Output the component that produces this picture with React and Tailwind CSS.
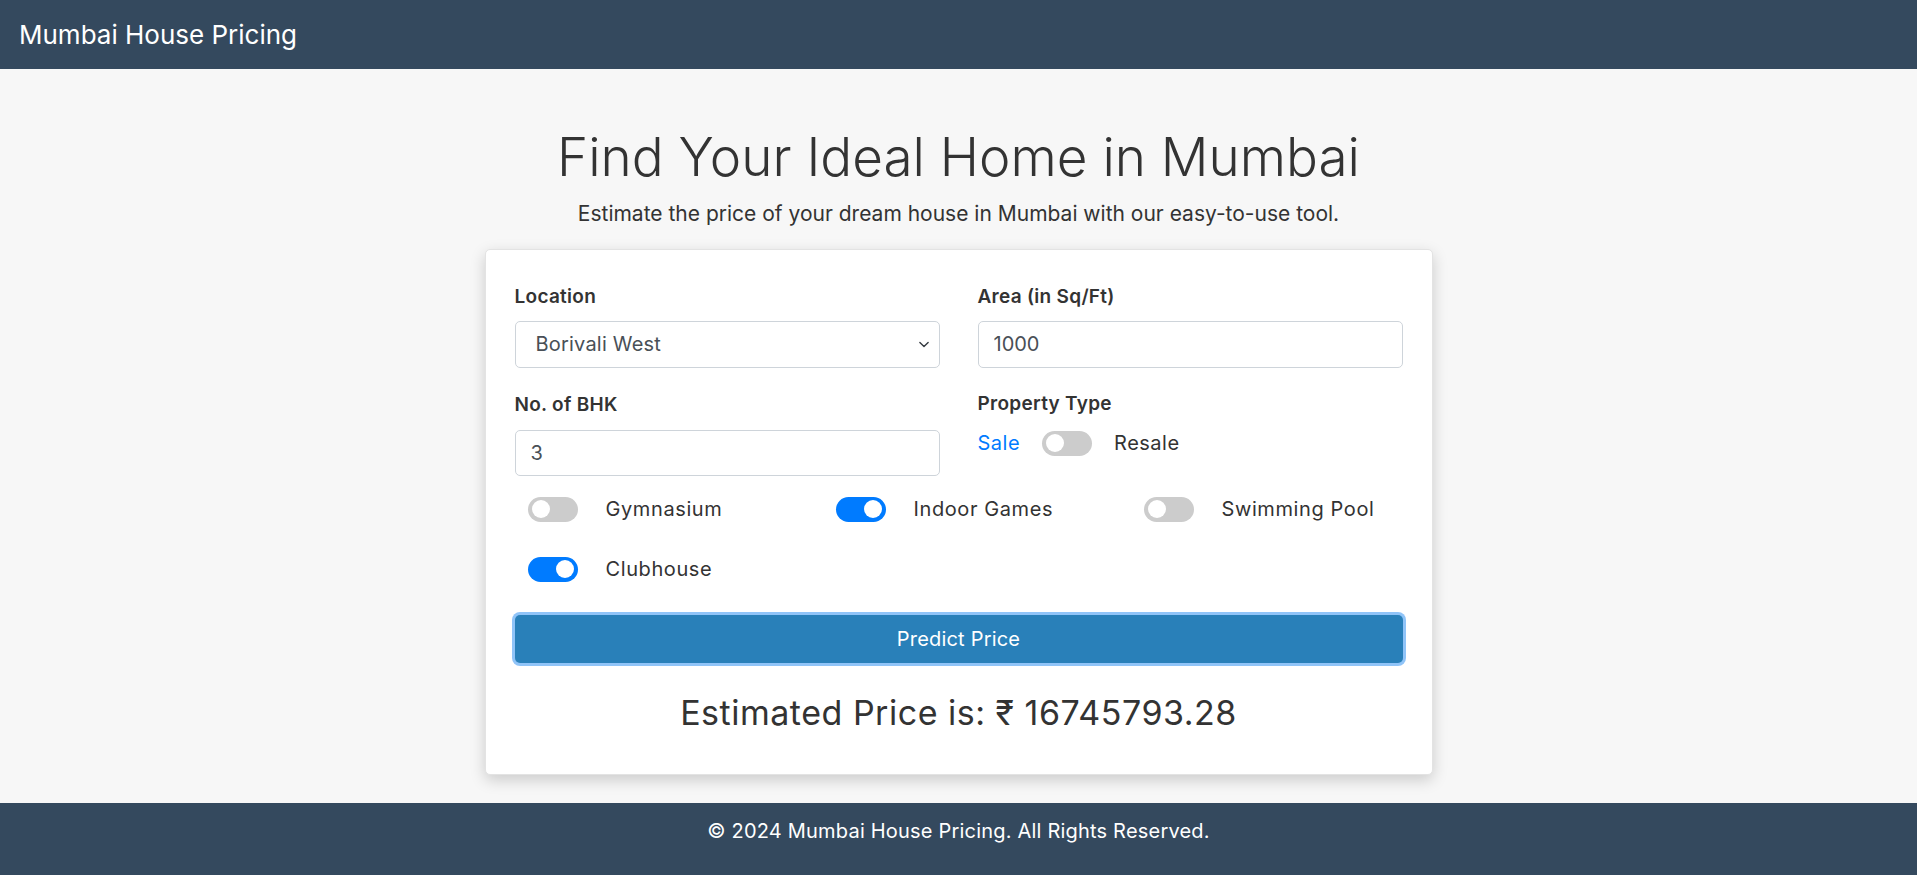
import React, { useState } from 'react'

const font = { fontFamily: 'Inter, "Noto Sans", sans-serif' }

function Toggle({ on, onChange }) {
  return (
    <button
      type="button"
      onClick={onChange}
      className={`relative w-[50px] h-[25px] rounded-full shrink-0 transition-colors ${on ? 'bg-[#007bff]' : 'bg-[#cccccc]'}`}
    >
      <span
        className={`absolute top-[3.5px] w-[18px] h-[18px] rounded-full bg-white transition-all ${on ? 'left-[28px]' : 'left-[4px]'}`}
      />
    </button>
  )
}

function Amenity({ label, on, onChange }) {
  return (
    <div className="flex items-center h-[25px]">
      <Toggle on={on} onChange={onChange} />
      <span className="ml-[28px] text-[20px] tracking-[0.03em] text-[#333]">{label}</span>
    </div>
  )
}

export default function App() {
  const [resale, setResale] = useState(false)
  const [amen, setAmen] = useState({ gym: false, indoor: true, pool: false, club: true })
  const flip = k => setAmen(a => ({ ...a, [k]: !a[k] }))

  return (
    <div className="min-h-screen flex flex-col bg-[#f7f7f7]" style={font}>
      {/* Navbar */}
      <header className="h-[69px] shrink-0 bg-[#34495e] flex items-center px-[19px]">
        <span className="text-[26px] text-white leading-none">Mumbai House Pricing</span>
      </header>

      <main className="flex-1 flex flex-col items-center">
        <h1 className="mt-[57px] text-[53px] font-light leading-[1.2] text-[#333]">
          Find Your Ideal Home in Mumbai
        </h1>
        <p className="mt-[9px] text-[21px] leading-[30px] text-[#333]">
          Estimate the price of your dream house in Mumbai with our easy-to-use tool.
        </p>

        {/* Card */}
        <div className="mt-[20px] w-[948px] bg-white border border-[#e3e3e3] rounded-[5px] shadow-[0_5px_15px_rgba(0,0,0,0.18)] px-[29px] pt-[33px] pb-[42px]">
          <div className="grid grid-cols-2 gap-x-[38px]">
            <div>
              <label className="block text-[19px] font-semibold tracking-[0.015em] leading-[27px] text-[#333]">Location</label>
              <div className="relative mt-[11px]">
                <select
                  defaultValue="Borivali West"
                  className="w-full h-[47px] appearance-none border border-[#ced4da] rounded-[5px] bg-white pl-[20px] text-[20px] tracking-[0.01em] text-[#495057] outline-none"
                >
                  <option>Borivali West</option>
                  <option>Andheri East</option>
                  <option>Thane West</option>
                </select>
                <svg className="absolute right-[9px] top-[18px] pointer-events-none" width="14" height="11" viewBox="0 0 16 16" fill="none">
                  <path d="M2 5l6 6 6-6" stroke="#343a40" strokeWidth="2" strokeLinecap="round" strokeLinejoin="round" />
                </svg>
              </div>
            </div>
            <div>
              <label className="block text-[19px] font-semibold tracking-[0.015em] leading-[27px] text-[#333]">Area (in Sq/Ft)</label>
              <input
                defaultValue="1000"
                className="mt-[11px] w-full h-[47px] border border-[#ced4da] rounded-[5px] px-[15px] text-[20px] text-[#495057] outline-none"
              />
            </div>

            <div className="mt-[23px]">
              <label className="block text-[19px] font-semibold tracking-[0.015em] leading-[27px] text-[#333]">No. of BHK</label>
              <input
                defaultValue="3"
                className="mt-[12px] w-full h-[46px] border border-[#ced4da] rounded-[5px] px-[15px] text-[20px] text-[#495057] outline-none"
              />
            </div>
            <div className="mt-[22px]">
              <label className="block text-[19px] font-semibold tracking-[0.015em] leading-[27px] text-[#333]">Property Type</label>
              <div className="mt-[14px] flex items-center h-[25px] text-[20px] tracking-[0.025em]">
                <span className={resale ? 'text-[#333]' : 'text-[#007bff]'}>Sale</span>
                <span className="mx-[22px] flex"><Toggle on={resale} onChange={() => setResale(r => !r)} /></span>
                <span className={resale ? 'text-[#007bff]' : 'text-[#333]'}>Resale</span>
              </div>
            </div>
          </div>

          {/* Amenities */}
          <div className="mt-[21px] pl-[13px] grid grid-cols-[308px_308px_1fr] gap-y-[35px]">
            <Amenity label="Gymnasium" on={amen.gym} onChange={() => flip('gym')} />
            <Amenity label="Indoor Games" on={amen.indoor} onChange={() => flip('indoor')} />
            <Amenity label="Swimming Pool" on={amen.pool} onChange={() => flip('pool')} />
            <Amenity label="Clubhouse" on={amen.club} onChange={() => flip('club')} />
          </div>

          <button
            type="button"
            className="mt-[33px] w-full h-[48px] rounded-[5px] bg-[#2980b9] text-white text-[20px] tracking-[0.01em] shadow-[0_0_0_3px_#90c4f8]"
          >
            Predict Price
          </button>

          <div className="mt-[31px] text-center text-[34px] tracking-[0.015em] leading-[38px] text-[#333]">
            Estimated Price is: ₹ 16745793.28
          </div>
        </div>
      </main>

      <footer className="h-[74px] shrink-0 mt-[28px] bg-[#34495e] pt-[15px] text-center text-[20px] tracking-[0.01em] leading-[27px] text-white">
        © 2024 Mumbai House Pricing. All Rights Reserved.
      </footer>
    </div>
  )
}
